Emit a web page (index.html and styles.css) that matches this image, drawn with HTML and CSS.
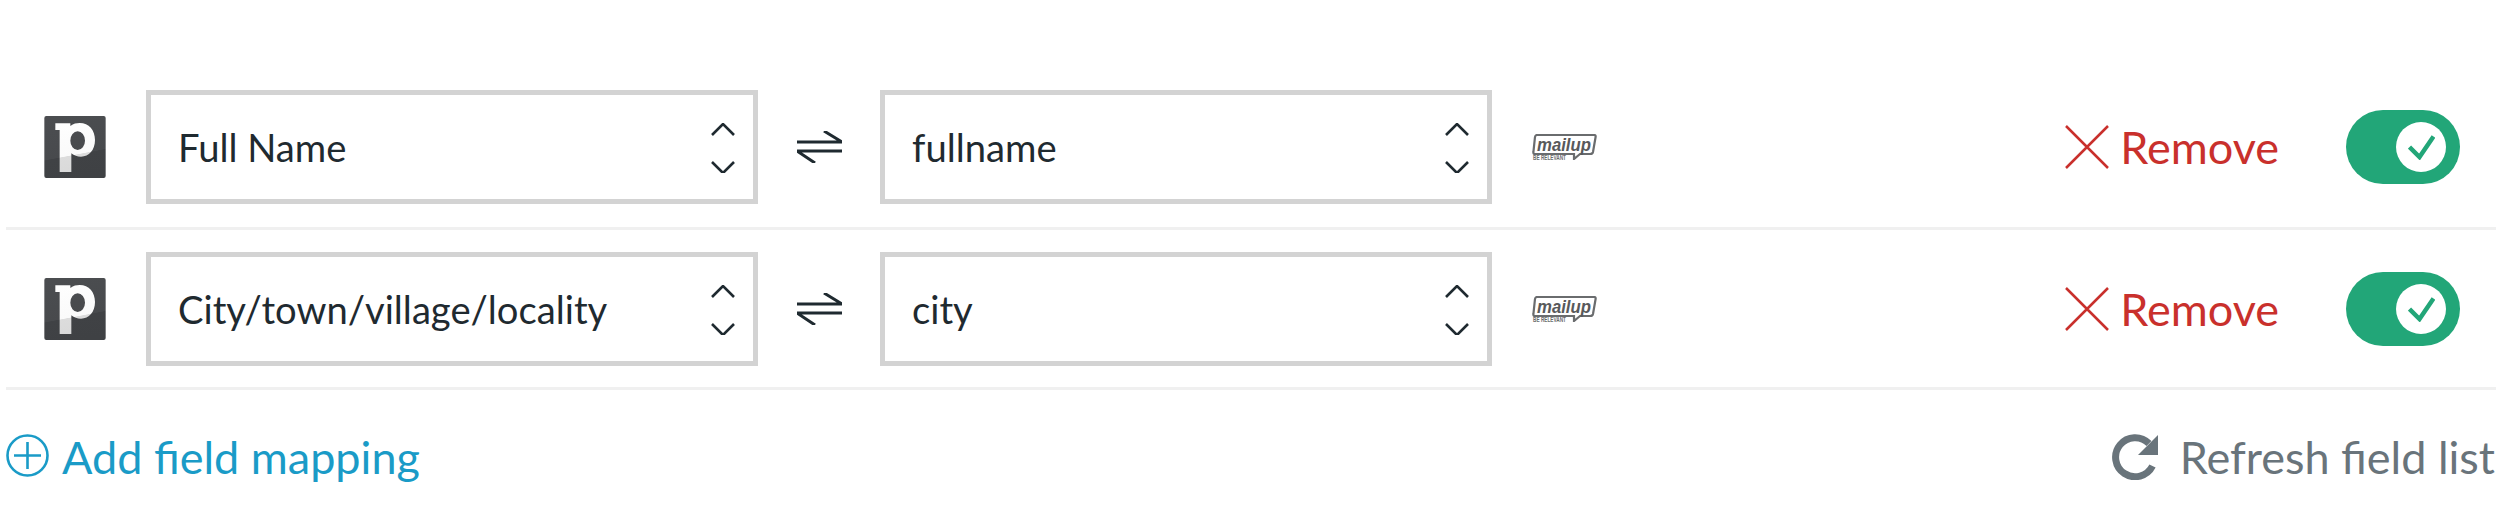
FILE: index.html
```html
<!DOCTYPE html>
<html lang="en">
<head>
    <meta charset="UTF-8">
    <meta name="viewport" content="width=device-width, initial-scale=1.0">
    <title>Field mapping</title>
    <link rel="stylesheet" href="styles.css">
</head>
<body>
    <div class="mapping">
        <div class="mapping-row">
            <svg class="source-logo" viewBox="0 0 184 186">
                <defs>
                    <linearGradient id="logo-bg" gradientUnits="userSpaceOnUse" x1="70" y1="0" x2="105" y2="186">
                        <stop offset="0" stop-color="#4b4d50"/>
                        <stop offset="0.62" stop-color="#484a4d"/>
                        <stop offset="0.63" stop-color="#404245"/>
                        <stop offset="1" stop-color="#3f4144"/>
                    </linearGradient>
                    <linearGradient id="logo-p" gradientUnits="userSpaceOnUse" x1="70" y1="0" x2="105" y2="186">
                        <stop offset="0" stop-color="#ffffff"/>
                        <stop offset="0.62" stop-color="#fafafa"/>
                        <stop offset="0.63" stop-color="#dcdcdc"/>
                        <stop offset="1" stop-color="#d8d8d8"/>
                    </linearGradient>
                </defs>
                <rect width="184" height="186" rx="6" fill="url(#logo-bg)"/>
                <path fill="url(#logo-p)" fill-rule="evenodd" d="M33 22H78V30C88 23 96 21 106 21C134 21 152 42 152 72C152 102 134 122 110 122C98 122 90 119 81 112V168H46V42H33ZM78 74A22 28 0 1 0 122 74A22 28 0 1 0 78 74Z"/>
            </svg>
            <div class="field-select">
                <span>Full Name</span>
                <svg class="chevrons" viewBox="0 0 24 50"><path d="M1 12 12 1 23 12M1 39 12 50 23 39"/></svg>
            </div>
            <div class="swap">
                <svg viewBox="0 0 45 32"><path d="M0 11H45L27 0M45 20H0L18 32"/></svg>
            </div>
            <div class="field-select">
                <span>fullname</span>
                <svg class="chevrons" viewBox="0 0 24 50"><path d="M1 12 12 1 23 12M1 39 12 50 23 39"/></svg>
            </div>
            <svg class="target-logo" viewBox="0 0 66 26">
                <path class="bubble" d="M5 1H62Q64 1 63.6 3L61 18Q60.6 20 58 20H48L42 25V20H3Q1 20 1.4 18L3 3Q3.4 1 5 1Z"/>
                <text class="bubble-name" x="5" y="17" textLength="54" lengthAdjust="spacingAndGlyphs">mailup</text>
                <text class="bubble-tag" x="1" y="26" textLength="33" lengthAdjust="spacingAndGlyphs">BE RELEVANT</text>
            </svg>
            <div class="remove">
                <svg viewBox="0 0 44 44"><path d="M1 1 43 43M43 1 1 43"/></svg>
                <span>Remove</span>
            </div>
            <div class="toggle">
                <div class="toggle-knob">
                    <svg viewBox="0 0 27 26"><path d="M1.5 13 11.5 23 25.5 2.5"/></svg>
                </div>
            </div>
        </div>

        <div class="mapping-row">
            <svg class="source-logo" viewBox="0 0 184 186">
                <rect width="184" height="186" rx="6" fill="url(#logo-bg)"/>
                <path fill="url(#logo-p)" fill-rule="evenodd" d="M33 22H78V30C88 23 96 21 106 21C134 21 152 42 152 72C152 102 134 122 110 122C98 122 90 119 81 112V168H46V42H33ZM78 74A22 28 0 1 0 122 74A22 28 0 1 0 78 74Z"/>
            </svg>
            <div class="field-select">
                <span>City/town/village/locality</span>
                <svg class="chevrons" viewBox="0 0 24 50"><path d="M1 12 12 1 23 12M1 39 12 50 23 39"/></svg>
            </div>
            <div class="swap">
                <svg viewBox="0 0 45 32"><path d="M0 11H45L27 0M45 20H0L18 32"/></svg>
            </div>
            <div class="field-select">
                <span>city</span>
                <svg class="chevrons" viewBox="0 0 24 50"><path d="M1 12 12 1 23 12M1 39 12 50 23 39"/></svg>
            </div>
            <svg class="target-logo" viewBox="0 0 66 26">
                <path class="bubble" d="M5 1H62Q64 1 63.6 3L61 18Q60.6 20 58 20H48L42 25V20H3Q1 20 1.4 18L3 3Q3.4 1 5 1Z"/>
                <text class="bubble-name" x="5" y="17" textLength="54" lengthAdjust="spacingAndGlyphs">mailup</text>
                <text class="bubble-tag" x="1" y="26" textLength="33" lengthAdjust="spacingAndGlyphs">BE RELEVANT</text>
            </svg>
            <div class="remove">
                <svg viewBox="0 0 44 44"><path d="M1 1 43 43M43 1 1 43"/></svg>
                <span>Remove</span>
            </div>
            <div class="toggle">
                <div class="toggle-knob">
                    <svg viewBox="0 0 27 26"><path d="M1.5 13 11.5 23 25.5 2.5"/></svg>
                </div>
            </div>
        </div>

        <div class="mapping-footer">
            <div class="add-mapping">
                <svg viewBox="0 0 43 43"><circle cx="21.5" cy="21.5" r="20"/><path d="M8 21.5H35M21.5 8V35"/></svg>
                <span>Add field mapping</span>
            </div>
            <div class="refresh">
                <svg viewBox="0 0 46 46"><path class="refresh-arc" d="M37 9.5A19.5 19.5 0 1 0 40.5 32"/><path class="refresh-head" d="M46 1V21H26Z"/></svg>
                <span>Refresh field list</span>
            </div>
        </div>
    </div>
</body>
</html>
```

FILE: styles.css
```css
* {
    margin: 0;
    padding: 0;
    box-sizing: border-box;
}

html, body {
    height: 100%;
    overflow: hidden;
}

body {
    font-family: 'Lato', 'Liberation Sans', sans-serif;
    background-color: #fff;
    color: #1f2a30;
}

.mapping {
    margin: 68px 20px 0 6px;
}

.mapping-row {
    display: flex;
    align-items: center;
    height: 162px;
    padding: 0 36px 1px 38px;
    border-bottom: 3px solid #f0f0f0;
}

.mapping-row + .mapping-row {
    height: 160px;
    padding-top: 1px;
    padding-bottom: 0;
}

.source-logo {
    width: 62px;
    height: 62px;
    margin-right: 40px;
    flex-shrink: 0;
}

.field-select {
    display: flex;
    align-items: center;
    justify-content: space-between;
    width: 612px;
    height: 114px;
    padding: 0 18px 0 27px;
    border: 5px solid #d3d3d3;
    font-size: 38.2px;
    flex-shrink: 0;
}

.chevrons {
    width: 24px;
    height: 50px;
    margin-top: 2px;
    fill: none;
    stroke: #1f2a30;
    stroke-width: 2.6;
}

.swap {
    width: 122px;
    display: flex;
    justify-content: center;
    flex-shrink: 0;
}

.swap svg {
    width: 45px;
    height: 32px;
    fill: none;
    stroke: #1f2a30;
    stroke-width: 3;
}

.target-logo {
    width: 66px;
    height: 26px;
    margin-left: 40px;
    flex-shrink: 0;
}

.bubble {
    fill: none;
    stroke: #6a6c6e;
    stroke-width: 2.2;
}

.bubble-name {
    font-family: 'Liberation Sans', sans-serif;
    font-size: 19px;
    font-weight: bold;
    font-style: italic;
    fill: #58595b;
}

.bubble-tag {
    font-family: 'Liberation Sans', sans-serif;
    font-size: 6.5px;
    font-weight: bold;
    fill: #6a6c6e;
}

.remove {
    display: flex;
    align-items: center;
    gap: 11px;
    margin-left: auto;
    margin-right: 67px;
    color: #c9302c;
    font-size: 45px;
}

.remove svg {
    width: 44px;
    height: 44px;
    fill: none;
    stroke: #c9302c;
    stroke-width: 2.5;
}

.toggle {
    display: flex;
    align-items: center;
    justify-content: flex-end;
    width: 114px;
    height: 74px;
    padding-right: 14px;
    border-radius: 37px;
    background-color: #22a678;
}

.toggle-knob {
    display: flex;
    align-items: center;
    justify-content: center;
    width: 50px;
    height: 50px;
    border-radius: 50%;
    background-color: #fff;
}

.toggle-knob svg {
    width: 27px;
    height: 26px;
    fill: none;
    stroke: #22a678;
    stroke-width: 4.5;
}

.mapping-footer {
    display: flex;
    align-items: center;
    justify-content: space-between;
    margin-top: 40px;
    padding-right: 1px;
    font-size: 45px;
}

.add-mapping {
    display: flex;
    align-items: center;
    gap: 13px;
    color: #1a9bc7;
}

.add-mapping svg {
    width: 43px;
    height: 43px;
    margin-top: -3px;
    fill: none;
    stroke: #1a9bc7;
    stroke-width: 2.6;
}

.refresh {
    display: flex;
    align-items: center;
    gap: 22px;
    color: #69747b;
}

.refresh svg {
    width: 46px;
    height: 46px;
    margin-top: -1px;
}

.refresh-arc {
    fill: none;
    stroke: #69747b;
    stroke-width: 7;
}

.refresh-head {
    fill: #69747b;
}
```
